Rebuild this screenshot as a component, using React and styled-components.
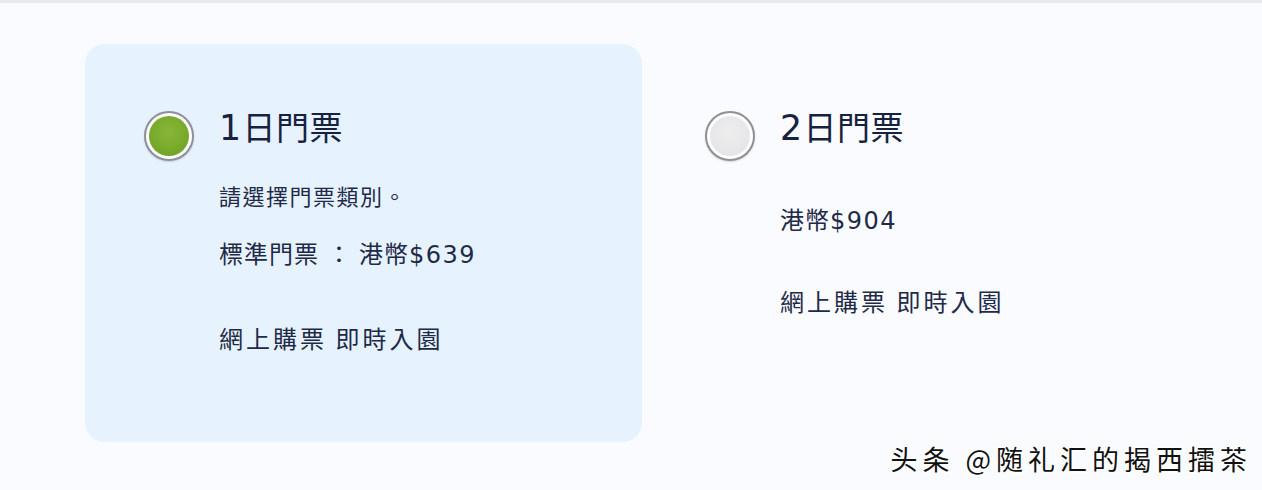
import styled, { createGlobalStyle } from 'styled-components'

const Global = createGlobalStyle`
  html, body {
    margin: 0;
    padding: 0;
    background: #f9fbfe;
  }
  body {
    font-family: "Noto Sans CJK TC", "Noto Sans", sans-serif;
  }
`

const Page = styled.div`
  width: 1262px;
  height: 490px;
  box-sizing: border-box;
  border-top: 3px solid #e6eaef;
  background: #f9fbfe;
  position: relative;
  overflow: hidden;
`

const Options = styled.div`
  display: grid;
  grid-template-columns: 557px 1fr;
  gap: 4px;
  padding: 41px 0 0 85px;
`

const Option = styled.div`
  height: 398px;
  box-sizing: border-box;
  border-radius: 20px;
  padding: 67px 0 0 59px;
  background: ${(p) => (p.$active ? '#e6f2fd' : 'transparent')};
  display: flex;
  gap: 25px;
`

const Radio = styled.div`
  width: 50px;
  height: 50px;
  flex: none;
  box-sizing: border-box;
  border-radius: 50%;
  border: 2px solid #8d9097;
  background: #ffffff;
  padding: 3px;
  box-shadow: 0 1px 2px rgba(0, 0, 0, 0.15);
`

const Dot = styled.div`
  width: 100%;
  height: 100%;
  border-radius: 50%;
  background: ${(p) =>
    p.$on
      ? 'radial-gradient(circle at 50% 40%, #86b737, #6c9f22)'
      : 'radial-gradient(circle at 50% 40%, #eeeeef, #e2e2e4)'};
`

const Body = styled.div`
  display: flex;
  flex-direction: column;
  color: #1f2a48;
`

const Title = styled.div`
  font-size: 33px;
  line-height: 36px;
  margin-top: -3px;
  letter-spacing: 0.5px;
  color: #18223f;
  white-space: nowrap;
`

const Line = styled.div`
  font-size: ${(p) => p.$size}px;
  line-height: 28px;
  letter-spacing: ${(p) => p.$spacing}px;
  margin-top: ${(p) => p.$gap}px;
  white-space: nowrap;
`

const Num = styled.span`
  font-family: "DejaVu Sans", sans-serif;
  font-size: ${(p) => p.$scale || 1}em;
  letter-spacing: 1.5px;
`

const Colon = styled.span`
  display: inline-block;
  width: 40px;
  text-align: center;
  letter-spacing: 0;
`

const Watermark = styled.div`
  position: absolute;
  right: 10px;
  bottom: 12px;
  font-size: 27px;
  color: #111;
  letter-spacing: 5px;
  text-shadow: 2px 2px 0 #fff, -1px -1px 0 #fff, 1px -1px 0 #fff, -1px 1px 0 #fff;
`

export default function App() {
  return (
    <Page>
      <Global />
      <Options>
        <Option $active>
          <Radio>
            <Dot $on />
          </Radio>
          <Body>
            <Title>
              <Num $scale={1.05}>1</Num>日門票
            </Title>
            <Line $gap={35} $size={22} $spacing={1.5}>請選擇門票類別。</Line>
            <Line $gap={30} $size={24} $spacing={1}>
              標準門票<Colon>：</Colon>港幣<Num>$639</Num>
            </Line>
            <Line $gap={55} $size={24} $spacing={3}>網上購票 即時入園</Line>
          </Body>
        </Option>
        <Option>
          <Radio>
            <Dot />
          </Radio>
          <Body>
            <Title>
              <Num $scale={1.05}>2</Num>日門票
            </Title>
            <Line $gap={59} $size={24} $spacing={1}>
              港幣<Num>$904</Num>
            </Line>
            <Line $gap={52} $size={24} $spacing={3}>網上購票 即時入園</Line>
          </Body>
        </Option>
      </Options>
      <Watermark>头条 @随礼汇的揭西擂茶</Watermark>
    </Page>
  )
}
